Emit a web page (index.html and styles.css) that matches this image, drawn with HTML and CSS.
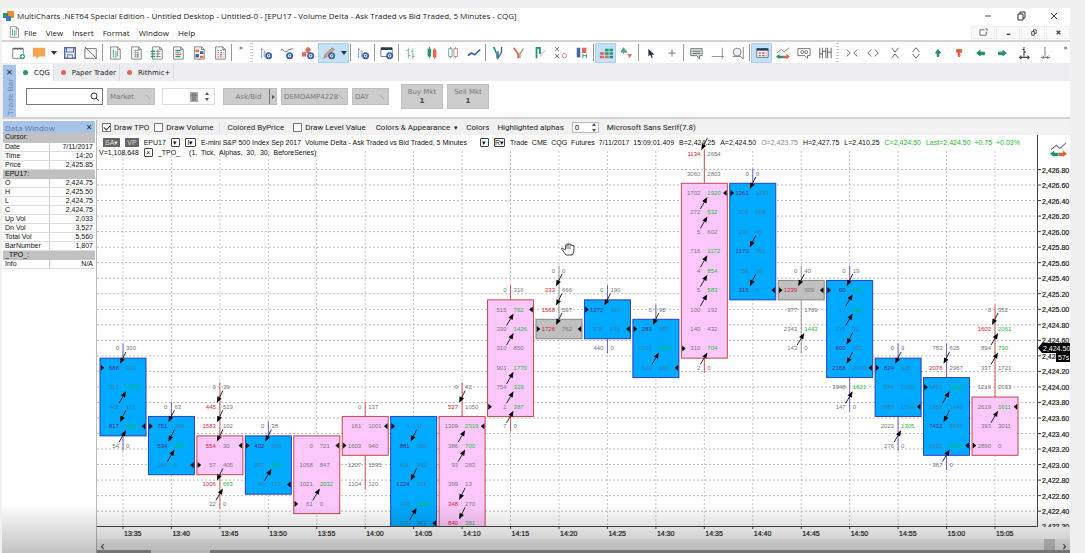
FILE: index.html
```html
<!DOCTYPE html>
<html lang="en">
<head>
<meta charset="utf-8">
<title>MultiCharts .NET64 Special Edition</title>
<link rel="stylesheet" href="styles.css">
</head>
<body>
<svg class="sprite" aria-hidden="true">
  <symbol id="gear" viewBox="0 0 16 16"><circle cx="11" cy="11" r="3" fill="#fff" stroke="#3d62a8" stroke-width="2"/><circle cx="11" cy="11" r="1" fill="#3d62a8"/></symbol>
  <symbol id="new" viewBox="0 0 16 16"><path d="M12 14H2V3h12v6" fill="#fff" stroke="#777"/><path d="M2 3h12" stroke="#666" stroke-width="2"/><circle cx="13" cy="12" r="3" fill="#2c9c77"/><path d="M13 10v4M11 12h4" stroke="#fff"/></symbol>
  <symbol id="open" viewBox="0 0 16 16"><path d="M1 2h14v10H8l-3 3v-3H1z" fill="#f5a44c"/></symbol>
  <symbol id="save" viewBox="0 0 16 16"><path d="M2 2h12v12H2z" fill="#fff" stroke="#4b66a0" stroke-width="1.6"/><path d="M4 2h8v5H4zM5 10h6v4H5z" fill="#dfe5f2" stroke="#4b66a0"/></symbol>
  <symbol id="off" viewBox="0 0 16 16"><path d="M1 3h13v11H1zM1 1l14 14" fill="none" stroke="#666"/></symbol>
  <symbol id="doc" viewBox="0 0 16 16"><path d="M3 1h8l3 3v11H3z" fill="#fff" stroke="#777"/><path d="M11 1v3h3" fill="none" stroke="#777"/></symbol>
  <symbol id="doc1" viewBox="0 0 16 16"><use href="#doc"/><path d="M6 4v9M9 6v8" stroke="#2c9c77"/><path d="M11 5v7" stroke="#888"/></symbol>
  <symbol id="doc2" viewBox="0 0 16 16"><use href="#doc"/><path d="M5 5h7M5 7.500h7M5 10h7M5 12.500h7M7.500 4v9M10 4v9" stroke="#888" stroke-width=".7"/><path d="M10 9v4" stroke="#2c9c77"/></symbol>
  <symbol id="doc3" viewBox="0 0 16 16"><use href="#doc"/><path d="M1 6h5M1 9h5M1 12h5" stroke="#2c9c77" stroke-width="1.600"/><path d="M7 6h5M7 9h5M7 12h5M9 4v9" stroke="#777"/></symbol>
  <symbol id="doc4" viewBox="0 0 16 16"><use href="#doc"/><path d="M5 5h6M5 12h6" stroke="#2c9c77" stroke-width="1.500"/><path d="M5 7h6" stroke="#4668ae"/><path d="M5 9.500h7" stroke="#e56b4e" stroke-width="1.500"/></symbol>
  <symbol id="doc5" viewBox="0 0 16 16"><use href="#doc"/><path d="M4 4h4v3H4zM9 11h4v3H9z" fill="#e56b4e"/><path d="M9 6h4v3H9zM4 9h4v4H4z" fill="#3d62a8"/></symbol>
  <symbol id="doc6" viewBox="0 0 16 16"><use href="#doc"/><path d="M5 5h7M5 7.500h7M5 10h7M5 12.500h7" stroke="#777" stroke-dasharray="2 1"/><path d="M8 7.500h2M8 10h2" stroke="#e56b4e" stroke-width="1.500"/></symbol>
  <symbol id="inst" viewBox="0 0 16 16"><path d="M3 2v12M6 5v8" stroke="#7b93bd"/><path d="M3 4h2M6 7h2" stroke="#999"/><use href="#gear"/></symbol>
  <symbol id="study" viewBox="0 0 16 16"><path d="M1 5c2-4 4 4 7 1s4-2 7-3" fill="none" stroke="#666"/><use href="#gear"/></symbol>
  <symbol id="signal" viewBox="0 0 16 16"><path d="M1 7h5v5H1zM6 2h4v6H6z" fill="#dd6a5a"/><path d="M4 5l4-4 4 4z" fill="#dd6a5a"/><use href="#gear"/></symbol>
  <symbol id="draw" viewBox="0 0 16 16"><path d="M2 14l2-5 8-7 2 2-8 8z" fill="#e3a183" stroke="#8d8580"/><use href="#gear"/></symbol>
  <symbol id="winset" viewBox="0 0 16 16"><path d="M1 3h13v9H1z" fill="#fff" stroke="#6c7482"/><path d="M1 3h13" stroke="#22345d" stroke-width="3"/><use href="#gear"/></symbol>
  <symbol id="bars" viewBox="0 0 16 16"><path d="M5 2v12M10 3v12" stroke="#69b79e"/><path d="M3 5h2M5 11h2M8 6h2M10 12h2" stroke="#888"/></symbol>
  <symbol id="candle" viewBox="0 0 16 16"><path d="M3 3h4v9H3z" fill="#1f986e"/><path d="M9 4h4v9H9z" fill="#e6674d"/><path d="M5 1v13" stroke="#1f986e"/><path d="M11 2v13" stroke="#e6674d"/></symbol>
  <symbol id="hollow" viewBox="0 0 16 16"><path d="M5 1v2M5 12v2M3 3h4v9H3z" fill="none" stroke="#5ea893"/><path d="M11 1v2M11 12v2M9 3h4v9H9z" fill="none" stroke="#bb8278"/></symbol>
  <symbol id="line" viewBox="0 0 16 16"><path d="M1 11l4-3 4 2 6-6" fill="none" stroke="#3d5fa3" stroke-width="2"/></symbol>
  <symbol id="kagi" viewBox="0 0 16 16"><path d="M3 1l4 9v4" fill="none" stroke="#2d9b78" stroke-width="2"/><path d="M12 1v6l-4 7V6" fill="none" stroke="#4565a6" stroke-width="1.600"/></symbol>
  <symbol id="renko" viewBox="0 0 16 16"><path d="M2 2l5 7v5" fill="none" stroke="#df6953" stroke-width="2"/><path d="M13 3L9 9v5" fill="none" stroke="#8a9a70" stroke-width="1.500"/></symbol>
  <symbol id="lineb" viewBox="0 0 16 16"><path d="M4 14V2h4v7" fill="none" stroke="#1f986e" stroke-width="2"/><path d="M9 12V8h2l3-3" fill="none" stroke="#bd9c96"/></symbol>
  <symbol id="pnf" viewBox="0 0 16 16"><path d="M1 1l5 5M6 1L1 6M1 9l5 5M6 9l-5 5" stroke="#666"/><circle cx="12" cy="11" r="2.500" fill="none" stroke="#cf7777"/></symbol>
  <symbol id="vol" viewBox="0 0 16 16"><path d="M2 2h4v11H2z" fill="#4565a6"/><path d="M8 2h5v6H8z" fill="#df6953"/><path d="M9 9v5M13 9v5M9 11h4" stroke="#2c9c77"/></symbol>
  <symbol id="delta" viewBox="0 0 16 16"><path d="M1 7h5v3H1zM1 11h5v3H1z" fill="#df6953"/><path d="M7 11h4v3H7z" fill="#df6953"/><path d="M7 7h4v3H7zM12 3h4v3h-4zM7 3h4v3H7zM12 7h4v3h-4zM12 11h4v3h-4z" fill="#1f986e"/></symbol>
  <symbol id="ud" viewBox="0 0 16 16"><path d="M4 2v7M1 7l3-5 4 5z" fill="#59a68e" stroke="#59a68e"/><path d="M11 7v7M8 9h6l-3 5z" fill="#dc8371"/></symbol>
  <symbol id="pointer" viewBox="0 0 16 16"><path d="M5 3v9l2-2 2 4 1-1-1-3h3z" fill="#25324b"/></symbol>
  <symbol id="cross" viewBox="0 0 16 16"><path d="M8 4v8M4 8h8" stroke="#666"/></symbol>
  <symbol id="note" viewBox="0 0 16 16"><path d="M2 3h13v8h-3v4l-3-4H2z" fill="#d8e0df" stroke="#62706e"/><path d="M4 6h9M4 8.500h9" stroke="#53635f"/></symbol>
  <symbol id="corner" viewBox="0 0 16 16"><path d="M14 2v13M2 12h14" stroke="#888"/></symbol>
  <symbol id="lens" viewBox="0 0 16 16"><circle cx="7" cy="7" r="4.500" fill="#eee" stroke="#777"/><path d="M10 11l4 4M14 1v14M2 12h8" stroke="#777"/></symbol>
  <symbol id="tablei" viewBox="0 0 16 16"><path d="M2 3h13v10H2z" fill="#fff" stroke="#596b89"/><path d="M2 4h13" stroke="#20345c" stroke-width="2.500"/><path d="M4 8h9M4 11h9" stroke="#c66b62" stroke-width="1.500" stroke-dasharray="3 1"/></symbol>
  <symbol id="scale" viewBox="0 0 16 16"><path d="M1 8l5-4 3 3 6-5" fill="none" stroke="#777"/><path d="M0 12l4-3v2h4v3H4v1z" fill="#23966f"/><path d="M16 12l-4-3v2H8v3h4v1z" fill="#e5603f"/></symbol>
  <symbol id="glass" viewBox="0 0 16 16"><path d="M1 3h14v8h-3v3l-3-3H1z" fill="#fff" stroke="#666"/><circle cx="6" cy="7" r="1.700" fill="none" stroke="#666"/><circle cx="10.500" cy="7" r="1.700" fill="none" stroke="#666"/></symbol>
  <symbol id="space" viewBox="0 0 16 16"><path d="M2 2v12M5 2v12M9 2v12M11 2v12M15 2v12M2 9h3M11 7h4M5 6h4" stroke="#555"/></symbol>
  <symbol id="h1" viewBox="0 0 16 16"><path d="M2 4l4 4-4 4M14 4l-4 4 4 4" fill="none" stroke="#555"/></symbol>
  <symbol id="h2" viewBox="0 0 16 16"><path d="M6 4L2 8l4 4M10 4l4 4-4 4" fill="none" stroke="#555"/></symbol>
  <symbol id="v1" viewBox="0 0 16 16"><path d="M4 2l4 5 4-5M4 14l4-5 4 5" fill="none" stroke="#555"/></symbol>
  <symbol id="v2" viewBox="0 0 16 16"><path d="M4 7l4-5 4 5M4 9l4 5 4-5" fill="none" stroke="#555"/></symbol>
  <symbol id="au" viewBox="0 0 16 16"><path d="M8 4l3 4H9v4H7V8H5z" fill="#1f8d68" stroke="#1f8d68"/></symbol>
  <symbol id="ar" viewBox="0 0 16 16"><path d="M5 4h6v3H9v5H7V7H5z" fill="#e2603f" stroke="#e2603f"/></symbol>
  <symbol id="al" viewBox="0 0 16 16"><path d="M3 8l4-3v2h5v3H7v1z" fill="#1f8d68" stroke="#1f8d68"/></symbol>
  <symbol id="arr" viewBox="0 0 16 16"><path d="M13 8L9 5v2H4v3h5v1z" fill="#1f8d68" stroke="#1f8d68"/></symbol>
  <symbol id="fit1" viewBox="0 0 16 16"><path d="M8 1v11M6 4h2M8 7h2M3 13h11M5 11l-2 2 2 2M12 11l2 2-2 2" fill="none" stroke="#444" stroke-width="1.200"/></symbol>
  <symbol id="fit2" viewBox="0 0 16 16"><path d="M8 1v11M3 13h11M5 11l2 2-2 2M12 11l-2 2 2 2" fill="none" stroke="#666"/></symbol>
</svg>

<div class="app">
  <header class="titlebar">
    <svg class="logo" viewBox="0 0 12 12"><path d="M4 1h7v7H4z" fill="#f08a2c"/><path d="M0 3h5v5H0z" fill="#2e8f70"/><path d="M3 6h5v5H3z" fill="#3f78c2"/></svg>
    <h1>MultiCharts .NET64 Special Edition - Untitled Desktop - Untitled-0 - [EPU17 - Volume Delta - Ask Traded vs Bid Traded, 5 Minutes - CQG]</h1>
    <div class="winctl">
      <button aria-label="Minimize"><svg viewBox="0 0 10 10"><path d="M2 5h6" stroke="#555"/></svg></button>
      <button aria-label="Restore"><svg viewBox="0 0 10 10"><path d="M2 3h5v6H2zM4 3V1h5v6H7" fill="none" stroke="#333"/></svg></button>
      <button aria-label="Close"><svg viewBox="0 0 10 10"><path d="M2 2l6 6M8 2L2 8" stroke="#333"/></svg></button>
    </div>
  </header>
  <nav class="menubar">
    <svg class="docicon" viewBox="0 0 16 16"><use href="#doc1"/></svg>
    <button>File</button><button>View</button><button>Insert</button><button>Format</button><button>Window</button><button>Help</button>
    <div class="childctl">
      <button aria-label="Detach"><svg viewBox="0 0 10 10"><path d="M6 2H1v6h7V4M7 1h2v2" fill="none" stroke="#666"/></svg></button>
      <button aria-label="Minimize chart"><svg viewBox="0 0 10 10"><path d="M3 7h4" stroke="#444" stroke-width="1.500"/></svg></button>
      <button aria-label="Restore chart"><svg viewBox="0 0 10 10"><path d="M3 4h3v4H3zM5 4V2h3v4H6" fill="none" stroke="#444"/></svg></button>
      <button aria-label="Close chart"><svg viewBox="0 0 10 10"><path d="M3 3l4 4M7 3L3 7" stroke="#444" stroke-width="1.500"/></svg></button>
    </div>
  </nav>
  <div class="toolbar" role="toolbar" aria-label="Main">
    <button aria-label="New"><svg><use href="#new"/></svg></button><button aria-label="Open"><svg><use href="#open"/></svg></button><button class="drop" aria-label="Open menu"></button><button aria-label="Save"><svg><use href="#save"/></svg></button><button aria-label="Offline"><svg><use href="#off"/></svg></button>
    <i class="sep"></i>
    <button aria-label="Chart window"><svg><use href="#doc1"/></svg></button><button aria-label="Scanner"><svg><use href="#doc2"/></svg></button><button aria-label="Depth"><svg><use href="#doc3"/></svg></button><button aria-label="Tape"><svg><use href="#doc4"/></svg></button><button aria-label="Tracker"><svg><use href="#doc5"/></svg></button><button aria-label="Portfolio"><svg><use href="#doc6"/></svg></button>
    <i class="sep"></i><button class="more" aria-label="More tools">»</button><i class="handle"></i>
    <button aria-label="Instrument"><svg><use href="#inst"/></svg></button><button aria-label="Study"><svg><use href="#study"/></svg></button><button aria-label="Signal"><svg><use href="#signal"/></svg></button><span class="pair"><button aria-label="Drawing"><svg><use href="#draw"/></svg></button><button class="drop" aria-label="Drawing menu"></button></span>
    <i class="sep"></i><button aria-label="Format instrument"><svg><use href="#inst"/></svg></button><i class="sep"></i><button aria-label="Format window"><svg><use href="#winset"/></svg></button><i class="sep"></i>
    <button aria-label="Bars"><svg><use href="#bars"/></svg></button><button aria-label="Candles"><svg><use href="#candle"/></svg></button><button aria-label="Hollow candles"><svg><use href="#hollow"/></svg></button><button aria-label="Line"><svg><use href="#line"/></svg></button>
    <i class="sep"></i>
    <button aria-label="Kagi"><svg><use href="#kagi"/></svg></button><button aria-label="Renko"><svg><use href="#renko"/></svg></button><button aria-label="Line break"><svg><use href="#lineb"/></svg></button><button aria-label="Point and figure"><svg><use href="#pnf"/></svg></button><button aria-label="Volume profile"><svg><use href="#vol"/></svg></button>
    <i class="sep"></i>
    <button class="on" aria-label="Volume delta"><svg><use href="#delta"/></svg></button><button aria-label="Up down"><svg><use href="#ud"/></svg></button>
    <i class="sep"></i>
    <button aria-label="Pointer"><svg><use href="#pointer"/></svg></button><button aria-label="Crosshair"><svg><use href="#cross"/></svg></button>
    <i class="sep"></i>
    <button aria-label="Comment"><svg><use href="#note"/></svg></button><button aria-label="Axes"><svg><use href="#corner"/></svg></button><button aria-label="Zoom"><svg><use href="#lens"/></svg></button>
    <i class="sep"></i>
    <button class="on" aria-label="Data window"><svg><use href="#tablei"/></svg></button><button aria-label="Scale"><svg><use href="#scale"/></svg></button><button aria-label="Watch"><svg><use href="#glass"/></svg></button><button aria-label="Bar spacing"><svg><use href="#space"/></svg></button>
    <i class="handle"></i>
    <div class="spread"><button aria-label="Narrow"><svg><use href="#h1"/></svg></button><button aria-label="Widen"><svg><use href="#h2"/></svg></button><button aria-label="Compress"><svg><use href="#v1"/></svg></button><button aria-label="Expand"><svg><use href="#v2"/></svg></button><button aria-label="Up"><svg><use href="#au"/></svg></button><button aria-label="Down"><svg><use href="#ar"/></svg></button><button aria-label="Left"><svg><use href="#al"/></svg></button><button aria-label="Right"><svg><use href="#arr"/></svg></button><button aria-label="Fit"><svg><use href="#fit1"/></svg></button><button aria-label="Fit bars"><svg><use href="#fit2"/></svg></button></div>
    <button class="more" aria-label="More chart tools">»</button>
  </div>

  <section class="trade">
    <div class="strip"><button aria-label="Close trade bar">×</button><span>Trade Bar</span></div>
    <div class="tradebody">
      <div class="tabs"><button class="tab active">CQG</button><button class="tab">Paper Trader</button><button class="tab">Rithmic+</button></div>
      <div class="controls">
        <label class="search"><input aria-label="Account search"><svg viewBox="0 0 10 10"><circle cx="4" cy="4" r="3" fill="none" stroke="#333"/><path d="M6 6l3 3" stroke="#333"/></svg></label>
        <select class="grey market" aria-label="Order type"><option>Market</option></select>
        <div class="qty"><svg viewBox="0 0 8 10"><path d="M0 0h8v10H0z" fill="#aaa"/><path d="M2 2h4v2H2zM2 6h4M2 8h4" fill="none" stroke="#666"/></svg><span class="updown"><button aria-label="Increase"></button><button aria-label="Decrease"></button></span></div>
        <div class="askbid"><button>Ask/Bid</button><button aria-label="Ask/Bid menu"></button></div>
        <select class="grey account" aria-label="Account"><option>DEMOAMP4228</option></select>
        <select class="grey day" aria-label="Time in force"><option>DAY</option></select>
        <button class="order">Buy Mkt<b>1</b></button><button class="order">Sell Mkt<b>1</b></button>
      </div>
    </div>
  </section>

  <main class="work">
    <aside class="data">
      <h2>Data Window<button aria-label="Close data window">×</button></h2>
      <table>
        <tr><th colspan="2">Cursor:</th></tr>
        <tr><td>Date</td><td>7/11/2017</td></tr>
        <tr><td>Time</td><td>14:20</td></tr>
        <tr><td>Price</td><td>2,425.85</td></tr>
        <tr><th colspan="2">EPU17:</th></tr>
        <tr><td>O</td><td>2,424.75</td></tr>
        <tr><td>H</td><td>2,425.50</td></tr>
        <tr><td>L</td><td>2,424.75</td></tr>
        <tr><td>C</td><td>2,424.75</td></tr>
        <tr><td>Up Vol</td><td>2,033</td></tr>
        <tr><td>Dn Vol</td><td>3,527</td></tr>
        <tr><td>Total Vol</td><td>5,560</td></tr>
        <tr><td>BarNumber</td><td>1,807</td></tr>
        <tr><th colspan="2">_TPO_:</th></tr>
        <tr><td>Info</td><td>N/A</td></tr>
      </table>
    </aside>
    <section class="chart">
      <div class="options">
        <label><input type="checkbox" checked>Draw TPO</label>
        <label><input type="checkbox">Draw Volume</label>
        <i></i><span class="by">Colored ByPrice</span>
        <label><input type="checkbox">Draw Level Value</label>
        <button class="appear">Colors &amp; Appearance <small>▾</small></button><button class="colors">Colors</button>
        <label class="alphas">Highlighted alphas <span class="num"><input value="0"><span class="updown"><button aria-label="More"></button><button aria-label="Fewer"></button></span></span></label>
        <span>Microsoft Sans Serif(7.8)</span>
      </div>
      <div class="canvas">
        <svg class="plot" id="plot"></svg>
        <svg class="axis" id="axis"></svg>
        <div class="status">
          <p><em>SA▾</em><em>VP</em><span>EPU17</span><button class="box">▾</button><button class="box wide">I▾</button><span class="name">E-mini S&amp;P 500 Index Sep 2017&nbsp; Volume Delta - Ask Traded vs Bid Traded, 5 Minutes</span><button class="box">▾</button><button class="box wide">R▾</button><span class="feed">Trade&nbsp; CME&nbsp; CQG&nbsp; Futures&nbsp; 7/11/2017&nbsp; 15:09:01.409</span><span>B=2,424.25</span><span>A=2,424.50</span><span class="dim">O=2,423.75</span><span>H=2,427.75</span><span>L=2,410.25</span><span class="up">C=2,424.50</span><span class="up">Last=2,424.50&nbsp; +0.75&nbsp; +0.03%</span></p>
          <p class="second"><span>V=1,108,648</span><button class="box">×</button><span>_TPO_</span><span class="args">(1,&nbsp; Tick,&nbsp; Alphas,&nbsp; 30,&nbsp; 30,&nbsp; BeforeSeries)</span></p>
        </div>
      </div>
      <svg class="times" id="times"></svg>
      <div class="scroll"><button aria-label="Scroll left">‹</button><div class="thumb"></div><button aria-label="Scroll right">›</button></div>
      <div class="sheet"><i></i></div>
    </section>
  </main>
</div>
<script src="chart.js"></script>
</body>
</html>
```
FILE: styles.css
```css
* { box-sizing: border-box; }
body { margin: 0; background: #f0f0f0; font-family: "Open Sans", "Noto Sans", sans-serif; font-size: 8px; color: #222; overflow: hidden; }
button, input, select { font: inherit; color: inherit; padding: 0; margin: 0; border: 0; background: none; }
button { display: flex; align-items: center; justify-content: center; }
.sprite { display: none; }
.app { position: relative; display: flex; flex-direction: column; height: calc(100vh - 8px); margin: 8px 15px 0 2px; background: #fff; }
.app::after { content: ""; position: absolute; left: 0; right: 0; bottom: 0; height: 50px; background: linear-gradient(rgba(0,0,0,0), rgba(0,0,0,.24)); pointer-events: none; }

.titlebar { display: flex; align-items: center; height: 16px; padding-left: 1px; }
.logo { width: 12px; height: 12px; margin-right: 2px; }
h1 { margin: 0; flex: 1; font-size: 8px; font-weight: 400; line-height: 16px; white-space: nowrap; }
.winctl, .childctl { display: flex; }
.winctl button { width: 33px; height: 16px; }
.winctl svg { width: 10px; height: 10px; }
.menubar { display: flex; align-items: center; height: 18px; padding-left: 6px; border-bottom: 2px solid #d4d4d4; }
.docicon { width: 12px; height: 12px; margin-right: 4px; }
.menubar > button { height: 16px; margin-right: 9px; }
.childctl { margin-left: auto; }
.childctl button { width: 24px; height: 13px; margin-left: 1px; background: #fafafa; border: 1px solid #eee; }
.childctl svg { width: 9px; height: 9px; }

.toolbar { display: flex; align-items: center; height: 21px; padding-left: 5px; }
.toolbar button { flex: none; width: 21px; height: 20px; }
.toolbar svg { width: 14px; height: 14px; }
.toolbar .drop { width: 10px; }
.drop::after { content: ""; border: 3px solid transparent; border-top: 4px solid #333; border-bottom: 0; }
.sep { flex: none; width: 1px; height: 17px; margin: 0 1px; background: #999; }
.toolbar .more { width: 16px; height: 20px; align-items: flex-start; line-height: 8px; }
.toolbar .more:last-child { width: 9px; }
.handle { flex: none; width: 3px; height: 20px; margin: 0 2px 0 1px; background: repeating-linear-gradient(#ccc 0 1px, #fff 1px 3px); }
.pair { display: flex; }
.pair, .toolbar .on { background: #c5e1f8; outline: 1px solid #a9d0f0; outline-offset: -1px; }
.spread { display: flex; flex: 1; padding-right: 5px; }
.toolbar .spread button { flex: 1; }

.trade { display: flex; height: 56px; border-bottom: 2px solid #d2d2d4; background: #ededef; }
.strip { width: 13px; margin: 2px 0 0 1px; background: #a6c3ea; color: #6d84a6; }
.strip button { width: 13px; height: 12px; color: #222; font-size: 11px; }
.strip span { display: block; writing-mode: vertical-rl; transform: rotate(180deg); line-height: 13px; height: 40px; text-align: center; white-space: nowrap; }
.tradebody { flex: 1; display: flex; flex-direction: column; font-family: "DejaVu Sans", sans-serif; font-size: 7px; }
.tabs { display: flex; align-items: flex-end; height: 18px; }
.tab { height: 17px; padding: 0 3px 0 7px; gap: 6px; border-right: 1px solid #ddd; }
.tab::before { content: ""; width: 5px; height: 5px; border-radius: 50%; background: #e4674f; }
.tab.active { background: #fff; }
.tab.active::before { background: #23966f; }
.controls { flex: 1; display: flex; align-items: flex-start; padding: 3px 10px; background: #fff; }
.controls > * { margin-top: 4px; }
.search { display: flex; align-items: center; width: 77px; height: 17px; margin-right: 4px; border: 1px solid #777; }
.search input { flex: 1; min-width: 0; outline: 0; }
.search svg { width: 10px; height: 10px; margin-right: 2px; }
.grey { appearance: none; height: 17px; padding-left: 2px; border: 1px solid #bdbdbd; color: #777; background: #ccc linear-gradient(45deg, transparent 44%, #aaa 44% 56%, transparent 56%) no-repeat right 4px center / 4px 4px; }
.market { width: 48px; margin-right: 7px; }
.qty { display: flex; align-items: center; justify-content: flex-end; gap: 6px; width: 53px; height: 17px; padding-right: 4px; margin-right: 8px; border: 1px solid #ddd; }
.qty svg { width: 8px; height: 10px; }
.updown { display: flex; flex-direction: column; gap: 3px; }
.updown button { width: 6px; height: 3px; }
.updown button::after { content: ""; border: 2px solid transparent; border-top: 0; border-bottom: 3px solid #555; }
.updown button:last-child::after { border: 2px solid transparent; border-bottom: 0; border-top: 3px solid #555; }
.askbid { display: flex; width: 54px; height: 17px; margin-right: 4px; background: #ccc; border: 1px solid #bdbdbd; color: #777; }
.askbid button:first-child { flex: 1; padding-left: 4px; }
.askbid button:last-child { width: 7px; border-left: 1px solid #777; }
.askbid button:last-child::after { content: ""; border: 2px solid transparent; border-left: 3px solid #555; border-right: 0; }
.account { width: 67px; margin-right: 4px; }
.day { width: 37px; margin-right: 12px; }
.controls .order { flex-direction: column; width: 42px; height: 25px; margin: 0 4px 0 0; background: #ccc; border: 1px solid #c0c0c0; color: #777; line-height: 9px; }
.order b { color: #444; }

.work { flex: 1; min-height: 0; display: flex; padding-top: 1px; background: #f1f1f2; }
.data { width: 95px; padding: 1px 1px 0 1px; background: #fff; border-right: 1px solid #bbb; }
.data h2 { display: flex; justify-content: space-between; align-items: center; margin: 0; height: 12px; padding-left: 2px; background: #a6c3ea; color: #64799b; font-size: 8px; font-weight: 400; }
.data h2 button { width: 12px; height: 12px; color: #222; font-size: 10px; }
table { width: 100%; border-collapse: collapse; table-layout: fixed; font-family: "Liberation Sans", Arial, sans-serif; font-size: 7px; color: #111; }
tr { height: 9px; }
td, th { padding: 0 2px; height: 9px; line-height: 8px; font-weight: 400; text-align: left; border-bottom: 1px solid #ddd; }
th { background: #c1c1c1; border-color: #c1c1c1; }
td:first-child { width: 42px; border-right: 1px solid #ccc; }
td + td { text-align: right; }

.chart { flex: 1; min-width: 0; display: flex; flex-direction: column; }
.options { display: flex; align-items: center; height: 15px; padding-left: 5px; font-family: Roboto, sans-serif; font-size: 8px; white-space: nowrap; }
.options label { display: flex; align-items: center; gap: 3px; margin-right: 5px; }
.options input[type=checkbox] { appearance: none; width: 9px; height: 9px; border: 1px solid #777; background: #fff; }
.options input:checked::after { content: ""; display: block; width: 5px; height: 3px; margin: 1px; border: solid #333; border-width: 0 0 1px 1px; transform: rotate(-45deg); }
.options > i { width: 1px; height: 10px; margin-right: 8px; background: #ddd; }
.by { margin-right: 9px; }
.appear { margin: 0 8px 0 5px; gap: 4px; }
.appear small { font-size: 7px; }
.colors { margin-right: 8px; }
.options .alphas { gap: 8px; margin-right: 8px; }
.num { display: flex; align-items: center; width: 27px; height: 11px; padding: 0 1px 0 2px; border: 1px solid #bbb; background: #fff; }
.num input { flex: 1; min-width: 0; }
.canvas { position: relative; flex: 1; min-height: 0; display: flex; background: #fff; }
.plot { flex: 1; min-width: 0; height: 100%; border-bottom: 1px solid #444; }
.axis { flex: none; width: 33px; height: 100%; border-left: 1px solid #444; }
svg text { font-family: "Liberation Sans", Arial, sans-serif; }
.cell { font-size: 6px; fill: #777; }
.cell.on-blue { fill: #3f7fa8; }
.cell.red { fill: #d8232f; }
.cell.on-blue.red { fill: #4d2f7d; }
.cell.green { fill: #22bd3a; }
.cell.on-blue.green { fill: #00c060; }
.price { font-size: 7px; fill: #222; stroke: #222; stroke-width: .2px; }
.tag { font-size: 7px; fill: #fff; }
.time { font-size: 7px; fill: #222; stroke: #222; stroke-width: .2px; }
.status { position: absolute; left: 2px; top: 2px; font-family: "Liberation Sans", Arial, sans-serif; font-size: 7px; color: #111; white-space: nowrap; }
.status p { display: flex; align-items: center; gap: 5px; height: 10px; margin: 0; padding-left: 4px; }
.status .second { padding-left: 0; }
.status em { padding: 0 2px; line-height: 9px; font-style: normal; background: #666; color: #ddd; }
.box { width: 9px; height: 9px; border: 1px solid #444; border-radius: 1px; font-size: 7px; line-height: 7px; }
.box.wide { width: 11px; }
.name { margin-right: 8px; }
.args { padding-left: 4px; }
.dim { color: #888; }
.up { color: #1dbb2f; }
.times { width: 100%; height: 12px; flex: none; background: #fff; }
.scroll { display: flex; align-items: center; height: 11px; background: #f1f1f1; }
.scroll button { width: 11px; height: 11px; font-size: 13px; }
.thumb { width: 11px; height: 11px; margin: 0 4px 0 auto; background: #c6c6c6; }
.sheet { display: flex; height: 3px; padding-left: 54px; background: #999; }
.sheet i { width: 59px; background: #eee; }
```
FILE: chart.js
```js
// Each bar: fill, first and last body row, open row, close row, first printed row, cells as "bid ask".
// A trailing r or g marks a highlighted imbalance.
const bars = [
  ["b", 9, 12, 9, 12, 8, "0 300,688r 330,317 1363g,448 171,817r 885g,54 0"],
  ["b", 12, 14, 12, 14, 11, "0 63,751r 365,534r 578g,168 0"],
  ["p", 13, 14, 14, 13, 10, "0 39,445r 519,1583r 102,554r 30,57 405,1006r 663g,22 0"],
  ["b", 13, 15, 13, 15, 12, "0 38,402r 286,367 466g,48 113"],
  ["p", 13, 16, 16, 13, 13, "0 721,1058 847,1021 2032g,61 0"],
  ["p", 12, 13, 13, 12, 11, "0 137,161 1001,1603 940,1207 1595,1104 120"],
  ["b", 12, 18, 12, 17, 12, "0 18,881r 360,411 409,1224r 391,343 1386g,511 381"],
  ["p", 12, 18, 19, 12, 10, "0 42,527r 1050,1309 2319g,386 700g,93 283,399 13,348r 270,840r 381g"],
  ["p", 6, 11, 11, 6, 5, "0 316,515 762g,330 1426g,310 850,901 1770g,754 329g,2 387g,7 0"],
  ["n", 7, 7, 7, 7, 4, "0 0,233r 666,1568r 597,1726r 762"],
  ["b", 6, 7, 6, 7, 5, "0 190,1072r 467,536 641,440 0"],
  ["b", 7, 9, 7, 9, 6, "0 95,283r 687,1031 1091g,503 162"],
  ["p", 0, 8, 8, 0, -2, "1134r 2654,3060 2803,1702 1920g,272 532g,5 602,716 1172g,4 854g,5 583g,100 192,140 432,310 704g,2 0"],
  ["b", 0, 5, 0, 5, -1, "0 9,1261r 1199,322 568,293 46,1170r 351,56 36,315r 0"],
  ["n", 5, 5, 5, 5, 4, "0 40,1239r 909,977 1769,2343 1443g,143 0"],
  ["b", 5, 9, 5, 9, 4, "0 19,60r 130g,17 906g,176 91,660r 351,2168r 2019,3948 1621g,147 0"],
  ["b", 9, 11, 9, 11, 8, "0 9,824r 928,584 1060,2083 1514,2022 1305g,276 0"],
  ["b", 10, 13, 10, 13, 8, "783 625,2076r 2967,1490 1580g,1386 1440,7432r 3536,6332 1659g,367 0"],
  ["p", 11, 13, 13, 11, 6, "0 352,1602r 2061g,894 790g,337 1721,1219 2033,2619 1611g,393 3011,2890 0"]
];
const fills = { b: "#00aaff", p: "#fcc8fc", n: "#c0c0c0" };
const strokes = { b: "#2b3fc0", p: "#c8464c", n: "#888888" };
const wicks = { b: "#6a62c8", p: "#d2555a", n: "#999999" };

const plot = document.getElementById("plot");
const axis = document.getElementById("axis");
const times = document.getElementById("times");

function arrow(x1, y1, x2, y2) {
  const a = Math.atan2(y2 - y1, x2 - x1);
  const bx = x2 - 6 * Math.cos(a), by = y2 - 6 * Math.sin(a);
  const dx = 2.4 * Math.sin(a), dy = 2.4 * Math.cos(a);
  return `<path d="M${x1} ${y1}L${bx} ${by}" stroke="#111" stroke-width=".9"/><path d="M${x2} ${y2}L${bx + dx} ${by - dy}L${bx - dx} ${by + dy}z" fill="#000"/>`;
}

function render() {
  const w = plot.clientWidth, h = plot.clientHeight;
  const step = (w - 68) / 18, row = 19.43, first = 26;
  const y = k => 58 + k * row;
  let g = "", p = "", t = "";

  for (let i = 0; i < 23; i++) {
    const gy = 34.5 + i * 15.53;
    g += `<path d="M0 ${gy}H${w}" stroke="#bdbdbd" stroke-dasharray="2 2"/>`;
    p += `<path d="M0 ${gy}h3" stroke="#444"/><text class="price" x="4" y="${gy + 3}">2,${(426.8 - i * 0.2).toFixed(2)}</text>`;
  }
  p += `<text class="price" x="4" y="394">2,422.20</text>`;
  bars.forEach((b, i) => {
    const x = first + i * step;
    g += `<path d="M${x} 16V${h}" stroke="#c6c6c6" stroke-dasharray="2 2"/>`;
  });
  bars.forEach(([type, top, bottom, open, close, start, cells], i) => {
    const x = first + i * step, list = cells.split(",");
    const half = 23, last = start + list.length - 1;
    if (start < top) g += `<path d="M${x} ${y(start) - 5}V${y(top)}" stroke="${wicks[type]}"/>`;
    if (last > bottom) g += `<path d="M${x} ${y(bottom)}V${y(last) + 5}" stroke="${wicks[type]}"/>`;
    g += `<rect x="${x - half}" y="${y(top) - row / 2}" width="${half * 2}" height="${(bottom - top + 1) * row}" fill="${fills[type]}" stroke="${strokes[type]}"/>`;
    g += `<path d="M${x - half + 1} ${y(open) - 2.5}l3 2.500l-3 2.500zM${x + half - 1} ${y(close) - 2.5}l-3 2.500l3 2.500z" fill="#000" stroke="#000" stroke-width=".5"/>`;
    let arrows = "";
    list.forEach((pair, n) => {
      const k = start + n, [l, r] = pair.split(" ");
      const blue = type === "b" && k >= top && k <= bottom ? " on-blue" : "";
      const red = l.endsWith("r"), green = r.endsWith("g");
      g += `<text class="cell${blue}${red ? " red" : ""}" text-anchor="end" x="${x - 4}" y="${y(k) + 2}">${parseInt(l)}</text>`;
      g += `<text class="cell${blue}${green ? " green" : ""}" x="${x + 3}" y="${y(k) + 2}">${parseInt(r)}</text>`;
      if (red) arrows += arrow(x + 3, y(k) - 16, x - 3, y(k) - 4);
      if (green) arrows += arrow(x - 4, y(k) + 16, x + 3, y(k) + 4);
    });
    g += arrows;
    const minutes = 815 + i * 5;
    t += `<path d="M${x} 0v2" stroke="#444"/><text class="time" x="${x + 1}" y="9">${Math.floor(minutes / 60)}:${String(minutes % 60).padStart(2, "0")}</text>`;
  });
  g += `<g transform="translate(${w / 2 - 6} 106)"><path d="M4 9L1 7c-1 1 0 2 1 3l3 4h6c2-2 2-5 2-9 0-1-2-1-2 0 0-2-2-2-2-1 0-2-2-2-2 0 0-2-2-1-2 0z" fill="#fff" stroke="#444"/><path d="M5 4v4M7 3v5M9 4v4" stroke="#444" stroke-width=".8"/></g>`;
  p += `<path d="M0 213l4-5h29v10H4z" fill="#000"/><text class="tag" x="5" y="216">2,424.50</text><rect x="18" y="218" width="15" height="9" fill="#000"/><text class="tag" x="20" y="225">57s</text>`;
  p += `<svg x="12" y="6" width="17" height="17"><use href="#scale"/></svg>`;
  plot.innerHTML = g;
  axis.innerHTML = p;
  times.innerHTML = t;
}
render();
window.addEventListener("resize", render);
```
